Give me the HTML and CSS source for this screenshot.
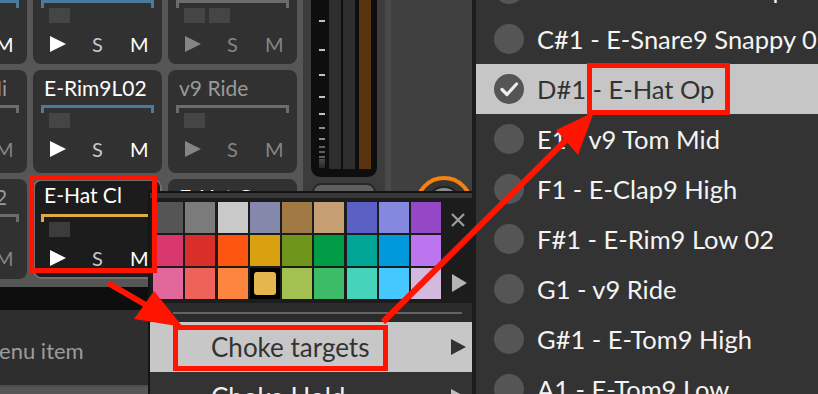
FILE: index.html
```html
<!DOCTYPE html>
<html>
<head>
    <title>Drum Machine - Choke targets</title>
    <link rel="stylesheet" href="styles.css">
</head>
<body>
    <div class="app">
        <div class="top">
            <div class="pads">
                <!-- row 0 -->
                <div class="pad">
                    <div class="pad-name">E-Kick9 Low</div>
                    <div class="bracket blue"></div>
                    <div class="squares"><span class="sq"></span></div>
                    <div class="controls"><span class="play"></span><span>S</span><span>M</span></div>
                </div>
                <div class="pad">
                    <div class="pad-name">E-Snare9</div>
                    <div class="bracket blue"></div>
                    <div class="squares"><span class="sq"></span></div>
                    <div class="controls"><span class="play"></span><span class="dim">S</span><span>M</span></div>
                </div>
                <div class="pad off">
                    <div class="pad-name">E-Clap9</div>
                    <div class="bracket"></div>
                    <div class="squares"><span class="sq"></span><span class="sq"></span></div>
                    <div class="controls"><span class="play"></span><span>S</span><span>M</span></div>
                </div>
                <!-- row 1 -->
                <div class="pad off">
                    <div class="pad-name">E-Kick9 Hi</div>
                    <div class="bracket"></div>
                    <div class="squares"><span class="sq"></span></div>
                    <div class="controls"><span class="play"></span><span>S</span><span>M</span></div>
                </div>
                <div class="pad">
                    <div class="pad-name">E-Rim9L02</div>
                    <div class="bracket blue"></div>
                    <div class="squares"><span class="sq"></span></div>
                    <div class="controls"><span class="play"></span><span class="dim">S</span><span>M</span></div>
                </div>
                <div class="pad off">
                    <div class="pad-name">v9 Ride</div>
                    <div class="bracket"></div>
                    <div class="squares"><span class="sq"></span></div>
                    <div class="controls"><span class="play"></span><span>S</span><span>M</span></div>
                </div>
                <!-- row 2 -->
                <div class="pad off">
                    <div class="pad-name">E-Tom9 L2</div>
                    <div class="bracket"></div>
                    <div class="squares"><span class="sq"></span></div>
                    <div class="controls"><span class="play"></span><span>S</span><span>M</span></div>
                </div>
                <div class="pad selected">
                    <div class="pad-name">E-Hat Cl</div>
                    <div class="bracket gold"></div>
                    <div class="squares"><span class="sq"></span></div>
                    <div class="controls"><span class="play"></span><span class="dim">S</span><span>M</span></div>
                </div>
                <div class="pad">
                    <div class="pad-name">E-Hat Op</div>
                    <div class="bracket"></div>
                    <div class="squares"><span class="sq"></span></div>
                    <div class="controls"><span class="play"></span><span>S</span><span>M</span></div>
                </div>
            </div>

            <div class="strip"></div>

            <div class="meter-col">
                <div class="meter">
                    <div class="ticks">
                        <i style="top:55px"></i>
                        <i style="top:84px"></i>
                        <i style="top:109px"></i>
                        <i style="top:131px"></i>
                        <i style="top:148px"></i>
                        <i class="low" style="top:162px"></i>
                        <i class="low" style="top:173px"></i>
                        <i class="lower" style="top:181px"></i>
                        <i class="lower" style="top:186px"></i>
                        <i class="lower" style="top:191px"></i>
                        <b></b>
                    </div>
                    <div class="bar"></div>
                    <div class="bar"></div>
                    <div class="bar level"></div>
                </div>
                <div class="meter-btn"></div>
            </div>

            <div class="sep"></div>

            <div class="knob-panel">
                <div class="knob"><div class="knob-cap"></div></div>
            </div>
        </div>

        <div class="lower">
            <div class="blackbar"></div>
            <div class="panel"><span class="panel-text">Menu item</span></div>
        </div>

        <!-- colour palette + context menu -->
        <div class="popup">
            <div class="popup-head"></div>
            <div class="palette">
                <div class="swatches">
                    <span style="background:#555555"></span>
                    <span style="background:#7b7b7b"></span>
                    <span style="background:#c9c9c9"></span>
                    <span style="background:#8488aa"></span>
                    <span style="background:#a07944"></span>
                    <span style="background:#c69f72"></span>
                    <span style="background:#5a60c4"></span>
                    <span style="background:#8489df"></span>
                    <span style="background:#9448c6"></span>

                    <span style="background:#d8386d"></span>
                    <span style="background:#d82f28"></span>
                    <span style="background:#fe5610"></span>
                    <span style="background:#d9a010"></span>
                    <span style="background:#6f961a"></span>
                    <span style="background:#009c45"></span>
                    <span style="background:#00a595"></span>
                    <span style="background:#0099dc"></span>
                    <span style="background:#bc75ef"></span>

                    <span style="background:#e2679a"></span>
                    <span style="background:#ee625a"></span>
                    <span style="background:#fe853d"></span>
                    <span class="current"><em style="background:#e4b64d"></em></span>
                    <span style="background:#a2c150"></span>
                    <span style="background:#3dbc68"></span>
                    <span style="background:#45d3bc"></span>
                    <span style="background:#45c7ff"></span>
                    <span style="background:#d3b9dd"></span>
                </div>
                <div class="palette-side">
                    <svg class="close" width="16" height="14" viewBox="0 0 16 14">
                        <path d="M2 1 L14 13 M14 1 L2 13" stroke="#9a9a9a" stroke-width="2.4" fill="none"/>
                    </svg>
                    <span class="more"></span>
                </div>
            </div>
            <div class="menu-sep"><hr></div>
            <div class="menu-item active">
                <span>Choke targets</span><span class="arrow"></span>
            </div>
            <div class="menu-item">
                <span>Choke Hold</span><span class="arrow"></span>
            </div>
        </div>

        <!-- submenu -->
        <div class="submenu">
            <div class="sub-item"><span class="radio"></span>C1 - E-Kick9 Short Op</div>
            <div class="sub-item"><span class="radio"></span>C#1 - E-Snare9 Snappy 02</div>
            <div class="sub-item checked">
                <span class="radio">
                    <svg width="30" height="30" viewBox="0 0 30 30">
                        <path d="M8 15.5 L13 20.5 L22.5 10" stroke="#eeeeee" stroke-width="3.2" fill="none" stroke-linecap="round" stroke-linejoin="round"/>
                    </svg>
                </span>D#1 - E-Hat Op
            </div>
            <div class="sub-item"><span class="radio"></span>E1 - v9 Tom Mid</div>
            <div class="sub-item"><span class="radio"></span>F1 - E-Clap9 High</div>
            <div class="sub-item"><span class="radio"></span>F#1 - E-Rim9 Low 02</div>
            <div class="sub-item"><span class="radio"></span>G1 - v9 Ride</div>
            <div class="sub-item"><span class="radio"></span>G#1 - E-Tom9 High</div>
            <div class="sub-item"><span class="radio"></span>A1 - E-Tom9 Low</div>
        </div>

        <!-- red annotations -->
        <svg class="notes" width="818" height="394" viewBox="0 0 818 394">
            <g fill="none" stroke="#fe1400" stroke-width="5">
                <rect x="31.5" y="177.5" width="123" height="93"/>
                <rect x="175.5" y="327.5" width="210" height="41"/>
                <rect x="589.5" y="65.5" width="138" height="47"/>
            </g>
            <g stroke="#fe1400" stroke-width="6">
                <line x1="108" y1="283" x2="158" y2="312"/>
                <line x1="383" y1="322" x2="572" y2="134"/>
            </g>
            <g fill="#fe1400">
                <polygon points="183,327 154,291 134,319"/>
                <polygon points="594,112 556,130 578,155"/>
            </g>
        </svg>
    </div>
</body>
</html>
```

FILE: styles.css
```css
* {
    box-sizing: border-box;
}

body {
    margin: 0;
    background-color: #2f2f2f;
    font-family: Lato, "Open Sans", sans-serif;
}

.app {
    position: relative;
    width: 818px;
    height: 394px;
    overflow: hidden;
    background-color: #565656;
}

/* ---------- pads ---------- */

.top {
    display: flex;
    height: 314px;
    margin-top: -35px;
}

.pads {
    flex: none;
    width: 399px;
    margin-left: -102px;
    display: grid;
    grid-template-columns: repeat(3, 129px);
    grid-template-rows: 99px 103px 100px;
    column-gap: 6px;
    row-gap: 6px;
}

.pad {
    display: flex;
    flex-direction: column;
    padding: 0 8px;
    background-color: #313131;
    border-radius: 8px;
    color: #fff;
}

.pad.selected {
    background-color: #1c1c1c;
    box-shadow: inset 0 0 0 2px #707070;
}

.pad-name {
    height: 35px;
    padding: 6px 3px 0;
    font-size: 21px;
    line-height: 24px;
    white-space: nowrap;
    overflow: hidden;
}

.pad.selected .pad-name {
    padding-top: 4px;
}

.pad.off .pad-name {
    color: #9a9a9a;
}

.bracket {
    height: 8px;
    border: 3px solid #6c6c6c;
    border-bottom: none;
}

.bracket.blue {
    border-color: #4b7b9c;
}

.bracket.gold {
    border-color: #dcab43;
}

.squares {
    display: flex;
    gap: 4px;
    padding-left: 8px;
}

.sq {
    width: 21px;
    height: 15px;
    background-color: #454545;
}

.pad.selected .sq {
    background-color: #3c3c3c;
}

.controls {
    display: grid;
    grid-template-columns: 42px 38px auto;
    align-items: center;
    height: 16px;
    margin-top: 13px;
    padding-left: 9px;
    font-size: 20px;
    line-height: 16px;
}

.controls .dim {
    color: #c8c8c8;
}

.pad.off .controls {
    color: #858585;
}

.play {
    width: 0;
    height: 0;
    border-left: 16px solid #fff;
    border-top: 8px solid transparent;
    border-bottom: 8px solid transparent;
}

.pad.off .play {
    border-left-color: #858585;
}

/* ---------- meter + knob ---------- */

.strip {
    width: 8px;
    margin-left: 6px;
    background-color: #3c3c3c;
}

.meter-col {
    width: 66px;
    display: flex;
    flex-direction: column;
    background-color: #3c3c3c;
}

.meter {
    display: flex;
    height: 212px;
    padding: 0 0 8px 8px;
    background-color: #0e0e0e;
    border-radius: 0 0 9px 9px;
}

.ticks {
    position: relative;
    width: 6px;
    margin-right: 4px;
}

.ticks i {
    position: absolute;
    left: 0;
    width: 6px;
    height: 2px;
    background-color: #c2c2c2;
}

.ticks i.low {
    background-color: #8c8c8c;
}

.ticks i.lower {
    background-color: #5e5e5e;
}

.ticks b {
    position: absolute;
    left: 0;
    top: 194px;
    width: 6px;
    height: 9px;
    background: linear-gradient(#4a4a4a, #262626);
}

.bar {
    width: 12px;
    margin-right: 2px;
    background-color: #2e2e2e;
}

.bar.level {
    margin-left: 2px;
    background-color: #5a3310;
}

.meter-btn {
    height: 20px;
    margin: 6px 1px 0;
    background-color: #5f5f5f;
    border: 2px solid #262626;
    border-radius: 9px 9px 0 0;
}

.sep {
    width: 14px;
    background: linear-gradient(to right, #3c3c3c 8px, #4a4a4a 8px);
}

.knob-panel {
    width: 81px;
    background-color: #404040;
}

.knob {
    display: flex;
    justify-content: center;
    width: 58px;
    height: 58px;
    margin: 211px 0 0 24px;
    border: 4px solid #f5820f;
    border-radius: 50%;
    background-color: #353535;
}

.knob-cap {
    width: 36px;
    height: 36px;
    margin-top: 6px;
    border-radius: 50%;
    background-color: #8a8a8a;
    border: 2px solid #222;
}

/* ---------- lower panel ---------- */

.lower {
    display: flex;
    flex-direction: column;
}

.blackbar {
    height: 23px;
    margin-top: 8px;
    background-color: #0e0e0e;
}

.panel {
    display: flex;
    align-items: center;
    height: 77px;
    background-color: #2e2e2e;
    border-bottom: 2px solid #4c4c4c;
}

.panel-text {
    margin-left: -21px;
    padding-top: 6px;
    font-size: 22px;
    color: #9c9c9c;
}

/* ---------- popup (palette + menu) ---------- */

.popup {
    position: absolute;
    left: 148px;
    top: 191px;
    width: 324px;
    height: 210px;
    background-color: #2b2b2b;
    border-left: 2px solid #141414;
    border-top: 2px solid #141414;
}

.popup-head {
    height: 5px;
    background-color: #383838;
}

.palette {
    display: flex;
    padding: 4px 0 4px 3px;
    background-color: #1c1c1c;
}

.swatches {
    display: grid;
    grid-template-columns: repeat(9, 30px);
    grid-auto-rows: 31px;
    column-gap: 2.25px;
    row-gap: 2px;
}

.swatches span.current {
    padding: 4px;
    background-color: #000;
}

.swatches em {
    display: block;
    height: 100%;
    border-radius: 3px;
}

.palette-side {
    flex: 1;
    display: flex;
    flex-direction: column;
    align-items: center;
    padding-left: 2px;
}

.close {
    margin-top: 11px;
}

.more {
    width: 0;
    height: 0;
    margin-top: 47px;
    margin-left: 3px;
    border-left: 15px solid #b4b4b4;
    border-top: 9px solid transparent;
    border-bottom: 9px solid transparent;
}

.menu-sep {
    height: 19px;
    padding: 9px 10px 0 23px;
}

.menu-sep hr {
    height: 2px;
    margin: 0;
    border: none;
    background-color: #646464;
}

.menu-item {
    display: flex;
    align-items: center;
    justify-content: space-between;
    height: 50px;
    padding: 0 6px 0 61px;
    background-color: #333;
    color: #f0f0f0;
    font-size: 26px;
}

.menu-item.active {
    background-color: #c7c7c7;
    color: #333;
}

.arrow {
    width: 0;
    height: 0;
    border-left: 15px solid #bdbdbd;
    border-top: 8px solid transparent;
    border-bottom: 8px solid transparent;
}

.menu-item.active .arrow {
    border-left-color: #333;
}

/* ---------- submenu ---------- */

.submenu {
    position: absolute;
    left: 472px;
    top: 0;
    width: 346px;
    height: 394px;
    background-color: #333;
    border-left: 4px solid #1c1c1c;
    overflow: hidden;
}

.sub-item {
    display: flex;
    align-items: center;
    gap: 13px;
    height: 50px;
    padding-left: 18px;
    color: #f4f4f4;
    font-size: 25.5px;
    white-space: nowrap;
}

.sub-item:first-child {
    margin-top: -36px;
}

.sub-item.checked {
    background-color: #c6c6c6;
    color: #333;
}

.radio {
    flex: none;
    width: 30px;
    height: 30px;
    border-radius: 50%;
    background-color: #555;
}

.radio svg {
    display: block;
}

/* ---------- annotations ---------- */

.notes {
    position: absolute;
    left: 0;
    top: 0;
    pointer-events: none;
}
```
